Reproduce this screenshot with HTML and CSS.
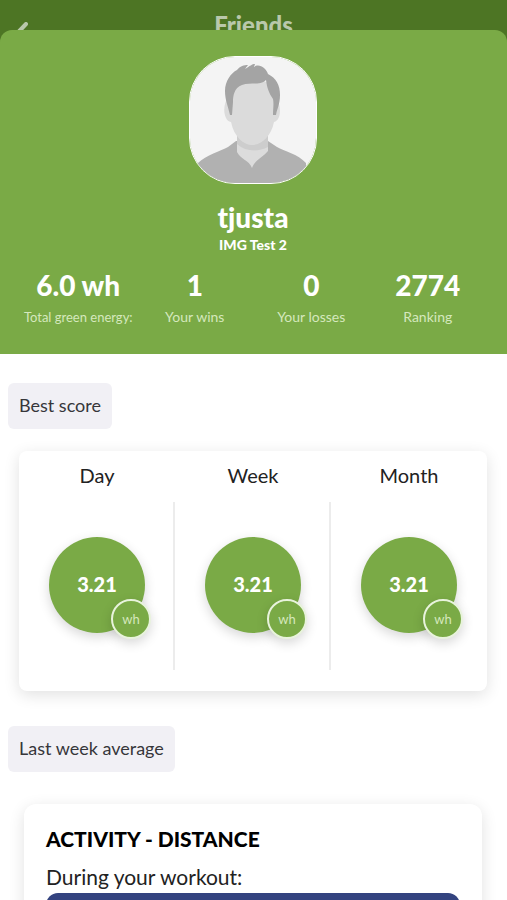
FILE: index.html
```html
<!DOCTYPE html>
<html lang="en">
<head>
    <meta charset="UTF-8">
    <meta name="viewport" content="width=device-width, initial-scale=1.0">
    <title>Friends</title>
    <link rel="stylesheet" href="styles.css">
</head>
<body>
    <header class="topbar">
        <button class="back" type="button" aria-label="Back">
            <svg width="14" height="24" viewBox="0 0 14 24">
                <path d="M12 2 L2.500 12 L12 22" fill="none" stroke="currentColor" stroke-width="4" stroke-linecap="round" stroke-linejoin="round"/>
            </svg>
        </button>
        <h1 class="topbar-title">Friends</h1>
    </header>

    <main class="sheet">
        <section class="profile">
            <svg class="avatar" viewBox="0 0 126 126" aria-hidden="true">
                <rect width="126" height="126" fill="#f4f4f4"/>
                <path d="M8 106 C16 98 31 94 38 90 L46 84 H78 L87 90 C94 94 108 97 116 106 V126 H8 Z" fill="#b1b1b1"/>
                <path d="M47 74 H78 V94 C73 100 65 103 62 111 C59 103 50 102 47 95 Z" fill="#dcdcdc"/>
                <path d="M47 79 H78 V90 C68 95 56 95 47 87 Z" fill="#cdcdcd"/>
                <path d="M35 47 C33 54 35 64 41 65 C44 80 54 88 62 88 C71 88 81 80 84 65 C90 64 91 54 89 47 L84 29 L70 22 H48 L40 32 Z" fill="#dbdbdb"/>
                <path d="M40 58 C38 49 35 43 35 34 C35 24 41 16 47 13 C50 9 54 8 58 8 L55 12 C60 9 62 7 65 7 L64 10 C69 6 76 11 78 17 C86 21 90 28 90 38 C90 47 87 52 86 58 L83 58 C83 52 84 47 83 42 C79 36 77 31 76 23 C70 29 60 25 52 28 C44 31 43 39 43 45 L42 58 Z" fill="#a4a4a4"/>
            </svg>
            <h2 class="name">tjusta</h2>
            <p class="team">IMG Test 2</p>
            <ul class="stats">
                <li><strong>6.0 wh</strong><span class="long">Total green energy:</span></li>
                <li><strong>1</strong><span>Your wins</span></li>
                <li><strong>0</strong><span>Your losses</span></li>
                <li><strong>2774</strong><span>Ranking</span></li>
            </ul>
        </section>

        <h3 class="chip">Best score</h3>
        <section class="card scores">
            <div class="score">
                <h4>Day</h4>
                <div class="score-body">
                    <div class="circle">3.21<span class="unit">wh</span></div>
                </div>
            </div>
            <div class="score">
                <h4>Week</h4>
                <div class="score-body">
                    <div class="circle">3.21<span class="unit">wh</span></div>
                </div>
            </div>
            <div class="score">
                <h4>Month</h4>
                <div class="score-body">
                    <div class="circle">3.21<span class="unit">wh</span></div>
                </div>
            </div>
        </section>

        <h3 class="chip">Last week average</h3>
        <section class="card activity">
            <h4 class="activity-title">ACTIVITY - DISTANCE</h4>
            <p class="activity-text">During your workout:</p>
            <div class="activity-bar"></div>
        </section>
    </main>
</body>
</html>
```

FILE: styles.css
```css
* {
    box-sizing: border-box;
}

body {
    margin: 0;
    height: 100vh;
    overflow: hidden;
    font-family: Lato, "Liberation Sans", sans-serif;
    color: #222;
    background-color: #fff;
}

h1, h2, h3, h4, p, ul {
    margin: 0;
    padding: 0;
    font-weight: normal;
}

.topbar {
    display: grid;
    grid-template-columns: 40px 1fr 40px;
    align-items: center;
    height: 50px;
    padding: 0 12px;
    background-color: #4d7524;
    color: #b9c8ab;
}

.back {
    display: flex;
    padding: 18px 0 0 2px;
    border: none;
    background: none;
    color: inherit;
    cursor: pointer;
}

.topbar-title {
    font-size: 24px;
    font-weight: 900;
    line-height: 50px;
    text-align: center;
}

/* slides up over the top bar */
.sheet {
    position: relative;
    margin-top: -20px;
}

.profile {
    display: flex;
    flex-direction: column;
    align-items: center;
    height: 324px;
    padding: 26px 21px 0 20px;
    border-radius: 12px 12px 0 0;
    background-color: #7aaa46;
    color: #fff;
}

.avatar {
    width: 128px;
    height: 128px;
    border: 1px solid #fff;
    border-radius: 46px;
}

.name {
    margin-top: 17px;
    font-size: 28px;
    font-weight: 900;
    line-height: 32px;
}

.team {
    margin-top: 2px;
    font-size: 14px;
    font-weight: 900;
    line-height: 20px;
}

.stats {
    display: grid;
    grid-template-columns: repeat(4, 1fr);
    width: 100%;
    margin-top: 14px;
    list-style: none;
    text-align: center;
}

.stats strong {
    display: block;
    font-size: 28px;
    font-weight: 900;
    line-height: 32px;
}

.stats span {
    display: block;
    margin-top: 6px;
    font-size: 14px;
    line-height: 20px;
    white-space: nowrap;
    color: #d5e8bd;
}

.stats .long {
    font-size: 13px;
}

.chip {
    width: fit-content;
    margin: 29px 8px 0;
    padding: 0 11px 2px;
    border-radius: 6px;
    background-color: #f1f0f5;
    color: #36363a;
    font-size: 18px;
    line-height: 44px;
}

.card {
    background-color: #fff;
    box-shadow: 0 4px 16px rgba(0, 0, 0, 0.12);
}

.scores {
    display: grid;
    grid-template-columns: repeat(3, 1fr);
    margin: 22px 20px 35px 19px;
    padding: 9px 0 21px;
    border-radius: 8px;
    text-align: center;
}

.score h4 {
    font-size: 20px;
    line-height: 30px;
}

.score-body {
    display: flex;
    justify-content: center;
    height: 168px;
    margin-top: 12px;
    padding-top: 35px;
    border: solid transparent;
    border-width: 0 2px;
}

.score:not(:last-child) .score-body {
    border-right-color: #ececec;
}

.circle {
    position: relative;
    width: 96px;
    height: 96px;
    border-radius: 50%;
    background-color: #7aaa46;
    box-shadow: 0 4px 12px rgba(0, 0, 0, 0.16);
    color: #fff;
    font-size: 20px;
    font-weight: 900;
    line-height: 94px;
}

.unit {
    position: absolute;
    right: -6px;
    bottom: -6px;
    width: 40px;
    height: 40px;
    border: 2px solid #e8f3dc;
    border-radius: 50%;
    background-color: #7aaa46;
    box-shadow: 0 4px 12px rgba(0, 0, 0, 0.16);
    color: #d5e8bd;
    font-size: 13px;
    font-weight: normal;
    line-height: 36px;
}

.activity {
    margin: 32px 25px 0 24px;
    padding: 20px 22px;
    border-radius: 12px;
}

.activity-title {
    color: #000;
    font-size: 21px;
    font-weight: 900;
    line-height: 30px;
}

.activity-text {
    margin-top: 8px;
    font-size: 21px;
    line-height: 30px;
}

.activity-bar {
    height: 60px;
    margin-top: 1px;
    border-radius: 12px;
    background-color: #33437f;
}
```
